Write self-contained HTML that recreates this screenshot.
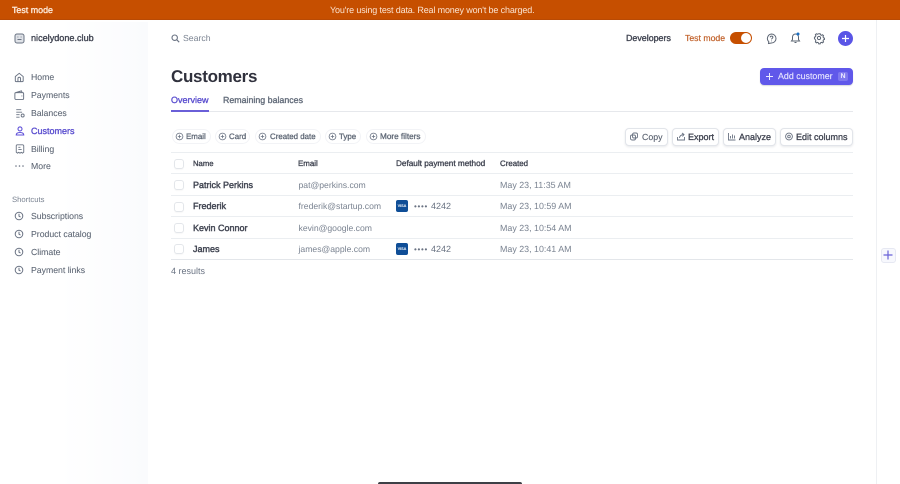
<!DOCTYPE html>
<html>
<head>
<meta charset="utf-8">
<style>
html,body{margin:0;padding:0;width:900px;height:484px;overflow:hidden;background:#fff}
body{position:relative;font-family:"Liberation Sans",sans-serif;color:#6a7383;text-rendering:geometricPrecision}
#w{position:absolute;left:0;top:0;width:900px;height:484px;filter:blur(.3px)}
.t{position:absolute;white-space:nowrap;line-height:14px;font-size:9px}
.b{-webkit-text-stroke:.35px}
.nav{color:#5b6472;font-size:8.700px;-webkit-text-stroke:.06px}
svg{position:absolute;overflow:visible}
.line{position:absolute;left:171px;width:682px;height:1px;background:#ebeef1}
.cb{position:absolute;left:174px;width:10px;height:10px;box-sizing:border-box;border:1px solid #e3e6ea;border-radius:3px;background:#fff;box-shadow:0 1px 1px rgba(0,0,0,.03)}
.name{color:#414552;-webkit-text-stroke:.42px;font-size:9px;left:193px}
.mail{left:298.500px;color:#7a8391;font-size:8.650px}
.date{left:500px;color:#7a8391;font-size:8.900px}
.th{color:#414552;-webkit-text-stroke:.33px;font-size:7.900px}
.chip{position:absolute;top:129px;height:13px;border:1px solid #f2f3f6;border-radius:8px}
.ft{top:130px;color:#5f6876;-webkit-text-stroke:.3px;font-size:7.900px}
.btn{position:absolute;top:128px;height:16px;border:1px solid #e2e5ea;border-radius:4px;background:#fff;box-shadow:0 1px 2px rgba(60,66,87,.12)}
.bt{top:130px;color:#414552;-webkit-text-stroke:.33px;font-size:9px}
.visa{position:absolute;left:396px;width:12px;height:12px;border-radius:2px;background:#0f4e97;color:#fff;font-size:3.800px;font-weight:700;line-height:12px;text-align:center}
.dots{left:414px;color:#6a7383;font-size:8px;letter-spacing:.7px}
.num{left:431px;color:#6a7383;font-size:9px}
</style>
</head>
<body>
<div id="w">
<div style="position:absolute;left:0;top:22px;width:148px;height:462px;background:linear-gradient(90deg,#fff 0,#fff 40%,#fafbfd 100%)"></div>
<div style="position:absolute;left:876px;top:20px;width:1px;height:466px;background:#eef0f3"></div>

<div style="position:absolute;left:-3px;top:-3px;width:906px;height:23px;background:#c64f00;border-bottom:1px solid #b84a04;box-sizing:border-box"></div>
<div class="t b" style="left:12px;top:3px;color:#fde9d8;font-size:8.900px">Test mode</div>
<div class="t" style="left:330px;top:3px;color:#fbe3d0;font-size:9px;letter-spacing:-.15px">You're using test data. Real money won't be charged.</div>

<!-- Account -->
<svg style="left:14px;top:33px" width="11" height="11" viewBox="0 0 11 11" fill="none" stroke="#6a7383" stroke-width="1"><rect x="1" y="1" width="9" height="9" rx="2" fill="#dfe2e7"/><path d="M3.500 6.500h4"/><path d="M3.500 4h.8M6.700 4h.8"/></svg>
<div class="t b" style="left:31px;top:31px;color:#414552;font-size:9.100px">nicelydone.club</div>

<!-- Search -->
<svg style="left:171px;top:34px" width="9" height="9" viewBox="0 0 9 9" fill="none" stroke="#6a7383" stroke-width="1.100"><circle cx="3.700" cy="3.700" r="2.700"/><path d="M5.800 5.800L8.200 8.200"/></svg>
<div class="t" style="left:183px;top:31px;color:#7a8391;font-size:8.700px">Search</div>

<!-- Nav -->
<svg style="left:14px;top:72px" width="10.500" height="10.500" viewBox="0 0 12 12" fill="none" stroke="#6a7383" stroke-width="1.100"><path d="M1.500 5.200L6 1.500l4.500 3.700v4.800a1 1 0 0 1-1 1h-7a1 1 0 0 1-1-1z"/><path d="M4.500 11V7.500a1.500 1.500 0 0 1 3 0V11"/></svg>
<div class="t nav" style="left:31px;top:70px">Home</div>
<svg style="left:14px;top:89.500px" width="10.500" height="10.500" viewBox="0 0 12 12" fill="none" stroke="#6a7383" stroke-width="1.100"><rect x="1" y="3" width="10" height="7.800" rx="1.300"/><path d="M2 3L8.500 1l.8 2"/><path d="M8.500 6.800h1"/></svg>
<div class="t nav" style="left:31px;top:88px">Payments</div>
<svg style="left:14.500px;top:107.500px" width="10" height="10" viewBox="0 0 12 12" fill="none" stroke="#6a7383" stroke-width="1.100"><path d="M1.500 2h6M1.500 5h7M1.500 8h4M1.500 11h4"/><circle cx="9.200" cy="9" r="1.800"/></svg>
<div class="t nav" style="left:31px;top:106px">Balances</div>
<svg style="left:14.500px;top:125.500px" width="10" height="10" viewBox="0 0 12 12" fill="none" stroke="#5f50d8" stroke-width="1.300"><circle cx="6" cy="3.500" r="2.400"/><path d="M1.500 10.800c0-2 1.500-3 4.500-3s4.500 1 4.500 3z"/></svg>
<div class="t b" style="left:31px;top:124px;color:#5b4fcf;font-size:9px">Customers</div>
<svg style="left:14.500px;top:143.500px" width="10" height="10" viewBox="0 0 12 12" fill="none" stroke="#6a7383" stroke-width="1.100"><path d="M2.800 1h6.400a1.300 1.300 0 0 1 1.300 1.300v7.500L9 11l-1.500-1L6 11 4.500 10 3 11 1.500 9.800V2.300A1.300 1.300 0 0 1 2.800 1z"/><path d="M4 4h2.500M4 6.500h4"/></svg>
<div class="t nav" style="left:31px;top:142px">Billing</div>
<svg style="left:14px;top:162px" width="12" height="8" viewBox="0 0 12 8" fill="#6a7383"><circle cx="2" cy="4" r=".8"/><circle cx="5.500" cy="4" r=".8"/><circle cx="9" cy="4" r=".8"/></svg>
<div class="t nav" style="left:31px;top:159px">More</div>

<div class="t" style="left:12px;top:193px;font-size:7.700px;color:#7a8391">Shortcuts</div>
<svg style="left:14px;top:211px" width="10" height="10" viewBox="0 0 10 10" fill="none" stroke="#6a7383" stroke-width="1"><circle cx="5" cy="5" r="3.800"/><path d="M5 2.800V5.200L6.500 6"/></svg>
<div class="t nav" style="left:31px;top:209px">Subscriptions</div>
<svg style="left:14px;top:229px" width="10" height="10" viewBox="0 0 10 10" fill="none" stroke="#6a7383" stroke-width="1"><circle cx="5" cy="5" r="3.800"/><path d="M5 2.800V5.200L6.500 6"/></svg>
<div class="t nav" style="left:31px;top:227px">Product catalog</div>
<svg style="left:14px;top:247px" width="10" height="10" viewBox="0 0 10 10" fill="none" stroke="#6a7383" stroke-width="1"><circle cx="5" cy="5" r="3.800"/><path d="M5 2.800V5.200L6.500 6"/></svg>
<div class="t nav" style="left:31px;top:245px">Climate</div>
<svg style="left:14px;top:265px" width="10" height="10" viewBox="0 0 10 10" fill="none" stroke="#6a7383" stroke-width="1"><circle cx="5" cy="5" r="3.800"/><path d="M5 2.800V5.200L6.500 6"/></svg>
<div class="t nav" style="left:31px;top:263px">Payment links</div>

<!-- Top right -->
<div class="t b" style="left:626px;top:31px;color:#414552;font-size:8.900px">Developers</div>
<div class="t" style="left:685px;top:31px;color:#c1612a;font-size:8.700px;-webkit-text-stroke:.2px">Test mode</div>
<div style="position:absolute;left:730px;top:32px;width:22px;height:12px;border-radius:6px;background:#c64f00"></div>
<div style="position:absolute;left:741px;top:33px;width:10px;height:10px;border-radius:50%;background:#fff"></div>
<svg style="left:766px;top:33px" width="11" height="11" viewBox="0 0 11 11" fill="none" stroke="#5b6472" stroke-width="1"><path d="M5.500 1a4.500 4.500 0 0 1 4.500 4.500A4.500 4.500 0 0 1 5.500 10L2.500 10.500l.3-1.800A4.500 4.500 0 0 1 5.500 1z"/><path d="M4.200 4.300c.1-1.600 2.700-1.500 2.700 0 0 1-1.400 1.100-1.400 2.100M5.500 7.600v.6"/></svg>
<svg style="left:790px;top:32px" width="11" height="12" viewBox="0 0 11 12" fill="none" stroke="#5b6472" stroke-width="1"><path d="M5.500 2a3 3 0 0 1 3 3v2.500l1 1.500h-8l1-1.500V5a3 3 0 0 1 3-3z"/><path d="M4.500 10.500h2"/><circle cx="8" cy="2" r="1.500" fill="#1a6fc4" stroke="none"/></svg>
<svg style="left:814px;top:33px" width="10" height="10" viewBox="0 0 11 11" fill="none" stroke="#5b6472" stroke-width="1.100"><circle cx="5.500" cy="5.500" r="1.800"/><path d="M4.700 1h1.600l.3 1.200 1.200.5 1.100-.6 1.100 1.100-.6 1.100.5 1.200 1.100.3v1.600l-1.100.3-.5 1.200.6 1.100-1.100 1.100-1.100-.6-1.200.5-.3 1.100H4.700l-.3-1.100-1.200-.5-1.100.6-1.100-1.100.6-1.100-.5-1.200L0 6.300V4.700l1.100-.3.5-1.200-.6-1.100 1.100-1.100 1.100.6 1.200-.5z" transform="translate(.5 -.2)"/></svg>
<div style="position:absolute;left:838px;top:31px;width:15px;height:15px;border-radius:50%;background:#5a55e6"></div>
<svg style="left:841px;top:34px" width="9" height="9" viewBox="0 0 9 9" stroke="#fff" stroke-width="1.200"><path d="M4.500 1v7M1 4.500h7"/></svg>

<!-- Heading -->
<div style="position:absolute;left:171px;top:65px;font-size:17px;line-height:24px;font-weight:700;color:#30313d;letter-spacing:-.3px;white-space:nowrap">Customers</div>
<div style="position:absolute;left:760px;top:68px;width:93px;height:17px;border-radius:4px;background:#6058ea;box-shadow:0 1px 1px rgba(60,66,87,.2)"></div>
<svg style="left:765px;top:72px" width="9" height="9" viewBox="0 0 9 9" stroke="#eceaff" stroke-width="1"><path d="M4.500 1v7M1 4.500h7"/></svg>
<div class="t" style="left:778px;top:69px;color:#e6e4ff;font-size:8.850px;-webkit-text-stroke:.15px">Add customer</div>
<div class="t" style="left:838px;top:72px;width:10px;height:9px;line-height:9px;text-align:center;background:#7f78ef;color:#eceaff;border-radius:2px;font-size:7px;font-weight:700">N</div>

<!-- Tabs -->
<div class="t b" style="left:171px;top:93px;color:#5b4fcf;font-size:9px">Overview</div>
<div class="t b" style="left:223px;top:93px;color:#646d7b;font-size:8.830px">Remaining balances</div>
<div class="line" style="top:111px;background:#e6e8ec"></div>
<div style="position:absolute;left:171px;top:110px;width:38px;height:2px;background:#6a5fd8"></div>

<!-- Filters -->
<div class="chip" style="left:172px;width:37px"></div>
<div class="chip" style="left:215px;width:33px"></div>
<div class="chip" style="left:255px;width:64px"></div>
<div class="chip" style="left:325px;width:34px"></div>
<div class="chip" style="left:366px;width:58px"></div>
<svg style="left:175px;top:132px" width="9" height="9" viewBox="0 0 9 9" fill="none" stroke="#6a7383" stroke-width=".8"><circle cx="4.500" cy="4.500" r="3.400"/><path d="M4.500 2.800v3.400M2.800 4.500h3.400"/></svg>
<div class="t ft" style="left:186px">Email</div>
<svg style="left:218px;top:132px" width="9" height="9" viewBox="0 0 9 9" fill="none" stroke="#6a7383" stroke-width=".8"><circle cx="4.500" cy="4.500" r="3.400"/><path d="M4.500 2.800v3.400M2.800 4.500h3.400"/></svg>
<div class="t ft" style="left:229px">Card</div>
<svg style="left:258px;top:132px" width="9" height="9" viewBox="0 0 9 9" fill="none" stroke="#6a7383" stroke-width=".8"><circle cx="4.500" cy="4.500" r="3.400"/><path d="M4.500 2.800v3.400M2.800 4.500h3.400"/></svg>
<div class="t ft" style="left:270px">Created date</div>
<svg style="left:328px;top:132px" width="9" height="9" viewBox="0 0 9 9" fill="none" stroke="#6a7383" stroke-width=".8"><circle cx="4.500" cy="4.500" r="3.400"/><path d="M4.500 2.800v3.400M2.800 4.500h3.400"/></svg>
<div class="t ft" style="left:339px">Type</div>
<svg style="left:369px;top:132px" width="9" height="9" viewBox="0 0 9 9" fill="none" stroke="#6a7383" stroke-width=".8"><circle cx="4.500" cy="4.500" r="3.400"/><path d="M4.500 2.800v3.400M2.800 4.500h3.400"/></svg>
<div class="t ft" style="left:380px;font-size:8.200px">More filters</div>

<!-- Buttons -->
<div class="btn" style="left:625px;width:41px"></div>
<div class="btn" style="left:672px;width:45px"></div>
<div class="btn" style="left:723px;width:51px"></div>
<div class="btn" style="left:780px;width:71px"></div>
<svg style="left:630px;top:132px" width="8" height="9" viewBox="0 0 8 9" fill="none" stroke="#6a7383" stroke-width=".9"><rect x="2.500" y="1" width="5" height="5" rx="1.500"/><rect x=".5" y="3" width="5" height="5" rx="1.500"/></svg>
<div class="t bt" style="left:642px;font-size:8.800px;color:#5a6270;-webkit-text-stroke:.12px">Copy</div>
<svg style="left:677px;top:132px" width="8" height="9" viewBox="0 0 8 9" fill="none" stroke="#6a7383" stroke-width=".9"><path d="M.5 5v3h7V5"/><path d="M2.500 6c0-2 1-3 4-3.500M5 1l2 1.500L5.500 4.500"/></svg>
<div class="t bt" style="left:688px">Export</div>
<svg style="left:728px;top:132px" width="8" height="9" viewBox="0 0 8 9" fill="none" stroke="#6a7383" stroke-width=".9"><path d="M.5 1v7h7M2.500 4v2.500M4.500 2.500v4M6.500 3.500v3"/></svg>
<div class="t bt" style="left:739px">Analyze</div>
<svg style="left:785px;top:132px" width="8" height="9" viewBox="0 0 8 9" fill="none" stroke="#6a7383" stroke-width=".9"><circle cx="4" cy="4.500" r="3.400"/><circle cx="4" cy="4.500" r="1.300"/></svg>
<div class="t bt" style="left:796px">Edit columns</div>

<!-- Table -->
<div class="line" style="top:152px"></div>
<div class="cb" style="top:159px"></div>
<div class="t th" style="left:193px;top:157px;font-size:7.700px">Name</div>
<div class="t th" style="left:298px;top:157px">Email</div>
<div class="t th" style="left:396px;top:157px;font-size:8.200px">Default payment method</div>
<div class="t th" style="left:500px;top:157px">Created</div>
<div class="line" style="top:173px"></div>

<div class="cb" style="top:180px"></div>
<div class="t name" style="top:178px">Patrick Perkins</div>
<div class="t mail" style="top:178px">pat@perkins.com</div>
<div class="t date" style="top:178px">May 23, 11:35 AM</div>
<div class="line" style="top:195px"></div>

<div class="cb" style="top:202px"></div>
<div class="t name" style="top:199px">Frederik</div>
<div class="t mail" style="top:199px">frederik@startup.com</div>
<div class="visa" style="top:200px">VISA</div>
<div class="t dots" style="top:200px">••••</div>
<div class="t num" style="top:199px">4242</div>
<div class="t date" style="top:199px">May 23, 10:59 AM</div>
<div class="line" style="top:216px"></div>

<div class="cb" style="top:223px"></div>
<div class="t name" style="top:221px">Kevin Connor</div>
<div class="t mail" style="top:221px">kevin@google.com</div>
<div class="t date" style="top:221px">May 23, 10:54 AM</div>
<div class="line" style="top:238px"></div>

<div class="cb" style="top:244px"></div>
<div class="t name" style="top:242px">James</div>
<div class="t mail" style="top:242px">james@apple.com</div>
<div class="visa" style="top:243px">VISA</div>
<div class="t dots" style="top:243px">••••</div>
<div class="t num" style="top:242px">4242</div>
<div class="t date" style="top:242px">May 23, 10:41 AM</div>
<div class="line" style="top:259px;background:#e3e6ea"></div>

<div class="t" style="left:171px;top:264px;color:#6a7383;font-size:9px">4 results</div>

<!-- Right plus -->
<div style="position:absolute;left:881px;top:248px;width:13px;height:13px;border:1px solid #e6e8f2;border-radius:3px;background:#f7f8fd"></div>
<svg style="left:883px;top:250px" width="10" height="10" viewBox="0 0 10 10" stroke="#6a62d8" stroke-width="1.200"><path d="M5 .5v9M.5 5h9"/></svg>

<!-- Bottom bar -->
<div style="position:absolute;left:378px;top:482px;width:144px;height:4px;background:#3d4046;border-radius:2px 2px 0 0"></div>
</div>
</body>
</html>
